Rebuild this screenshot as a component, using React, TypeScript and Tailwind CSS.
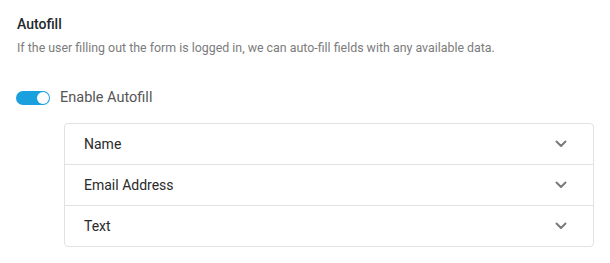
import { useState } from "react";

const fields = ["Name", "Email Address", "Text"];

function Chevron() {
  return (
    <svg width="12" height="8" viewBox="0 0 12 8" fill="none" className="text-[#7a7a7a]">
      <path d="M1.5 1.5L6 6l4.5-4.5" stroke="currentColor" strokeWidth="2" strokeLinecap="round" strokeLinejoin="round" />
    </svg>
  );
}

export default function App() {
  const [enabled, setEnabled] = useState(true);

  return (
    <div className="min-h-screen bg-white px-4 pt-[13px] font-['Roboto',sans-serif]">
      <h3 className="pl-[1px] text-[14px] font-medium leading-[22px] text-[#23282d]">Autofill</h3>
      <p className="mt-[3px] pl-[1px] text-[12.4px] leading-[20px] text-[#7c7c7c]">
        If the user filling out the form is logged in, we can auto-fill fields with any available data.
      </p>

      <div className="mt-[30px] flex h-5 items-center gap-[10px]">
        <button
          onClick={() => setEnabled(!enabled)}
          className={`flex h-[14px] w-[34px] items-center rounded-full px-[1px] ${
            enabled ? "justify-end bg-[#1a9fdf]" : "justify-start bg-[#ccc]"
          }`}
        >
          <span className="block h-[12px] w-[12px] rounded-full bg-white" />
        </button>
        <span className="text-[14.5px] leading-5 text-[#555]">Enable Autofill</span>
      </div>

      <div className="ml-[48px] mt-[15px] rounded border border-[#e2e2e2]">
        {fields.map((f, i) => (
          <div
            key={f}
            className={`flex items-center justify-between pl-[19px] pr-[26px] ${
              i > 0 ? "h-[41px] border-t border-[#e2e2e2]" : "h-10"
            }`}
          >
            <span className="text-sm text-[#2a2a2a]">{f}</span>
            <Chevron />
          </div>
        ))}
      </div>
    </div>
  );
}
